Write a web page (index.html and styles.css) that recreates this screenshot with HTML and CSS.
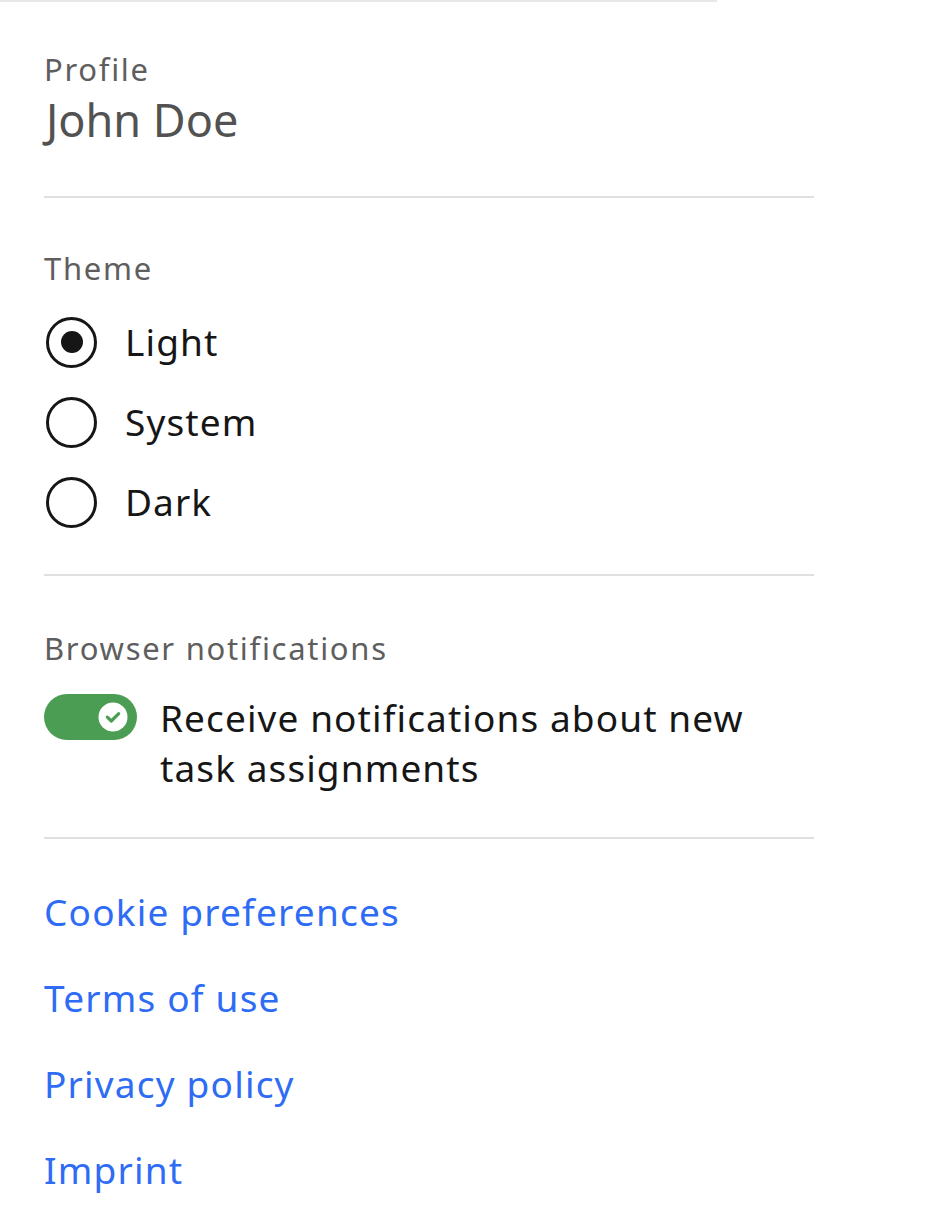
FILE: index.html
```html
<!DOCTYPE html>
<html lang="en">
<head>
<meta charset="utf-8">
<title>Settings</title>
<link rel="stylesheet" href="styles.css">
</head>
<body>
<div class="topline"></div>
<div class="panel">
  <section class="section section-profile">
    <div class="label">Profile</div>
    <div class="name">John Doe</div>
  </section>
  <hr class="divider">
  <section class="section section-theme">
    <div class="label">Theme</div>
    <div class="radios">
      <label class="radio-row">
        <span class="radio checked"><span class="dot"></span></span>
        <span class="radio-text">Light</span>
      </label>
      <label class="radio-row">
        <span class="radio"></span>
        <span class="radio-text">System</span>
      </label>
      <label class="radio-row">
        <span class="radio"></span>
        <span class="radio-text">Dark</span>
      </label>
    </div>
  </section>
  <hr class="divider">
  <section class="section section-notify">
    <div class="label">Browser notifications</div>
    <div class="toggle-row">
      <span class="toggle">
        <span class="knob">
          <svg width="30" height="30" viewBox="0 0 30 30"><circle cx="15" cy="15" r="14.5" fill="#fff"/><path d="M9.3 15.2 L13.3 19 L20.7 11.6" fill="none" stroke="#4a9d52" stroke-width="3.2" stroke-linecap="round" stroke-linejoin="round"/></svg>
        </span>
      </span>
      <span class="toggle-text">Receive notifications about new task assignments</span>
    </div>
  </section>
  <hr class="divider">
  <nav class="links">
    <a class="link" href="#">Cookie preferences</a>
    <a class="link" href="#">Terms of use</a>
    <a class="link" href="#">Privacy policy</a>
    <a class="link" href="#">Imprint</a>
  </nav>
</div>
</body>
</html>
```
FILE: styles.css
```css
html, body {
  margin: 0;
  padding: 0;
  background: #ffffff;
}
body {
  font-family: "Noto Sans", "IBM Plex Sans", Arial, sans-serif;
  color: #161616;
}
.topline {
  width: 717px;
  height: 2px;
  background: #e8e8e8;
}
.panel {
  width: 770px;
  margin-left: 44px;
  display: flex;
  flex-direction: column;
}
.label {
  font-size: 31px;
  line-height: 40px;
  color: #5e5e5e;
  letter-spacing: 1.7px;
}
.section-profile {
  padding-top: 47px;
}
.name {
  margin-top: 3px;
  font-size: 45px;
  line-height: 56px;
  color: #525252;
  padding-left: 2px;
}
.divider {
  margin: 0;
  border: 0;
  height: 2px;
  background: #e0e0e0;
}
.section-profile + .divider {
  margin-top: 48px;
}
.section-theme {
  padding-top: 50px;
  padding-bottom: 32px;
}
.radios {
  margin-top: 14px;
  display: flex;
  flex-direction: column;
}
.radio-row {
  height: 80px;
  display: flex;
  align-items: center;
  gap: 28px;
}
.radio {
  box-sizing: border-box;
  width: 51px;
  height: 51px;
  margin-left: 2px;
  border: 3.5px solid #161616;
  border-radius: 50%;
  display: flex;
  align-items: center;
  justify-content: center;
  flex: none;
}
.dot {
  width: 22px;
  height: 22px;
  border-radius: 50%;
  background: #161616;
}
.radio-text {
  font-size: 37px;
  line-height: 50px;
  color: #161616;
  letter-spacing: 1.1px;
}
.section-notify {
  padding-top: 52px;
  padding-bottom: 44px;
}
.toggle-row {
  margin-top: 26px;
  display: flex;
  align-items: flex-start;
  gap: 23px;
}
.toggle {
  flex: none;
  width: 93px;
  height: 46px;
  border-radius: 23px;
  background: #4a9d52;
  display: flex;
  align-items: center;
  justify-content: flex-end;
  padding-right: 9px;
  box-sizing: border-box;
}
.knob {
  width: 30px;
  height: 30px;
  display: block;
}
.knob svg {
  display: block;
}
.toggle-text {
  max-width: 600px;
  font-size: 37px;
  line-height: 50px;
  color: #161616;
  letter-spacing: 1.1px;
  margin-top: -1px;
}
.links {
  padding-top: 30px;
  display: flex;
  flex-direction: column;
}
.link {
  font-size: 37px;
  line-height: 86px;
  color: #2f6cf6;
  text-decoration: none;
  letter-spacing: 1.2px;
}
```
